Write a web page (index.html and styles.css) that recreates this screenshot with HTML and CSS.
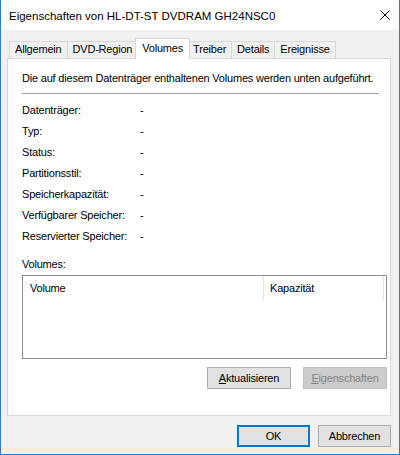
FILE: index.html
```html
<!DOCTYPE html>
<html lang="de">
<head>
  <meta charset="UTF-8">
  <meta name="viewport" content="width=device-width, initial-scale=1.0">
  <title>Eigenschaften von HL-DT-ST DVDRAM GH24NSC0</title>
  <link rel="stylesheet" href="styles.css">
</head>
<body>
  <div class="window">
    <div class="titlebar">
      <span class="title">Eigenschaften von HL-DT-ST DVDRAM GH24NSC0</span>
      <svg class="close" width="10" height="10" viewBox="0 0 10 10">
        <path d="M0.5 0.5 L9.5 9.5 M9.5 0.5 L0.5 9.5" stroke="#000" stroke-width="1" fill="none"/>
      </svg>
    </div>
    <div class="dialog">
      <div class="tabs">
        <div class="tab">Allgemein</div>
        <div class="tab">DVD-Region</div>
        <div class="tab active">Volumes</div>
        <div class="tab">Treiber</div>
        <div class="tab">Details</div>
        <div class="tab">Ereignisse</div>
      </div>
      <div class="panel">
        <p class="intro">Die auf diesem Datenträger enthaltenen Volumes werden unten aufgeführt.</p>
        <hr class="sep">
        <div class="props">
          <span>Datenträger:</span><span>-</span>
          <span>Typ:</span><span>-</span>
          <span>Status:</span><span>-</span>
          <span>Partitionsstil:</span><span>-</span>
          <span>Speicherkapazität:</span><span>-</span>
          <span>Verfügbarer Speicher:</span><span>-</span>
          <span>Reservierter Speicher:</span><span>-</span>
        </div>
        <div class="vol-label">Volumes:</div>
        <div class="listview">
          <div class="lv-header">
            <div class="lv-col col-volume">Volume</div>
            <div class="lv-col col-size">Kapazität</div>
          </div>
        </div>
        <div class="panel-buttons">
          <button class="btn"><u>A</u>ktualisieren</button>
          <button class="btn" disabled><u>E</u>igenschaften</button>
        </div>
      </div>
      <div class="dialog-buttons">
        <button class="btn btn-ok">OK</button>
        <button class="btn btn-small">Abbrechen</button>
      </div>
    </div>
  </div>
</body>
</html>
```

FILE: styles.css
```css
body {
  margin: 0;
  font-family: "Liberation Sans", Arial, sans-serif;
  font-size: 11px;
  letter-spacing: -0.2px;
  color: #000;
  background: #fff;
}
.window {
  width: 400px;
  height: 455px;
  box-sizing: border-box;
  border: 1px solid #2b7bd1;
  border-top: none;
  background: #f0f0f0;
  display: flex;
  flex-direction: column;
}
.titlebar {
  height: 30px;
  flex: none;
  background: #fff;
  display: flex;
  align-items: center;
  justify-content: space-between;
  padding-left: 8px;
}
.title {
  font-size: 11.5px;
  letter-spacing: 0;
  padding-top: 1px;
}
.close {
  margin-right: 9px;
}
.dialog {
  flex: 1;
  display: flex;
  flex-direction: column;
  padding: 8px 8px 7px 6px;
}
.tabs {
  display: flex;
  align-items: flex-end;
  height: 20px;
  padding-left: 2px;
}
.tab {
  height: 17px;
  box-sizing: border-box;
  padding: 0 5px;
  border: 1px solid #d9d9d9;
  border-bottom: none;
  line-height: 15px;
  background: #f0f0f0;
  margin-left: -1px;
}
.tab:first-child {
  margin-left: 0;
}
.tab.active {
  height: 21px;
  padding: 2px 6px 0;
  margin: 0 -2px -1px -3px;
  background: #fff;
  position: relative;
  z-index: 1;
}
.panel {
  flex: 1;
  background: #fff;
  border: 1px solid #d9d9d9;
  padding: 0 3px 0 14px;
  display: flex;
  flex-direction: column;
}
.intro {
  margin: 12px 0 0;
  line-height: 15px;
}
.sep {
  border: none;
  border-top: 1px solid #a0a0a0;
  height: 0;
  margin: 7px 8px 0 0;
}
.props {
  display: grid;
  grid-template-columns: 118px 1fr;
  grid-auto-rows: 21px;
  align-items: center;
  margin-top: 5px;
}
.vol-label {
  margin-top: 11px;
  line-height: 15px;
}
.listview {
  margin-top: 3px;
  height: 84px;
  box-sizing: border-box;
  border: 1px solid #8c8c8c;
}
.lv-header {
  display: flex;
  height: 24px;
}
.lv-col {
  line-height: 24px;
  box-sizing: border-box;
  border-right: 1px solid #e5e5e5;
}
.col-volume {
  width: 241px;
  padding-left: 7px;
}
.col-size {
  width: 120px;
  padding-left: 6px;
}
.panel-buttons {
  display: flex;
  justify-content: flex-end;
  gap: 12px;
  margin-top: 8px;
}
.btn {
  width: 84px;
  height: 22px;
  box-sizing: border-box;
  border: 1px solid #adadad;
  background: #e1e1e1;
  font-family: inherit;
  font-size: 11px;
  letter-spacing: -0.2px;
  color: #000;
  padding: 0;
  line-height: 18px;
}
.btn:disabled {
  background: #cccccc;
  border-color: #bfbfbf;
  color: #838383;
}
.dialog-buttons {
  display: flex;
  justify-content: flex-end;
  gap: 8px;
  margin-top: 9px;
}
.dialog-buttons .btn {
  width: 73px;
}
.btn-ok {
  border-color: #0078d7;
  box-shadow: inset 0 0 0 1px #0078d7;
}
```
